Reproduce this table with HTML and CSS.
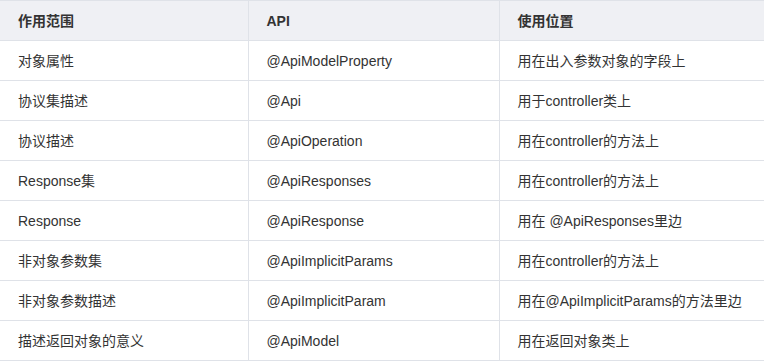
FILE: index.html
```html
<!DOCTYPE html>
<html lang="zh">
<head>
<meta charset="utf-8">
<link rel="stylesheet" href="styles.css">
</head>
<body>
<table class="api-table">
  <colgroup>
    <col class="c1"><col class="c2"><col class="c3">
  </colgroup>
  <thead>
    <tr><th>作用范围</th><th>API</th><th>使用位置</th></tr>
  </thead>
  <tbody>
    <tr><td>对象属性</td><td>@ApiModelProperty</td><td>用在出入参数对象的字段上</td></tr>
    <tr><td>协议集描述</td><td>@Api</td><td>用于controller类上</td></tr>
    <tr><td>协议描述</td><td>@ApiOperation</td><td>用在controller的方法上</td></tr>
    <tr><td>Response集</td><td>@ApiResponses</td><td>用在controller的方法上</td></tr>
    <tr><td>Response</td><td>@ApiResponse</td><td>用在 @ApiResponses里边</td></tr>
    <tr><td>非对象参数集</td><td>@ApiImplicitParams</td><td>用在controller的方法上</td></tr>
    <tr><td>非对象参数描述</td><td>@ApiImplicitParam</td><td>用在@ApiImplicitParams的方法里边</td></tr>
    <tr><td>描述返回对象的意义</td><td>@ApiModel</td><td>用在返回对象类上</td></tr>
  </tbody>
</table>
</body>
</html>
```

FILE: styles.css
```css
html, body {
  margin: 0;
  padding: 0;
  background: #ffffff;
}
body {
  font-family: "Liberation Sans", "Noto Sans CJK SC", sans-serif;
  font-size: 14px;
  color: #333333;
}
.api-table {
  width: 764px;
  border-collapse: collapse;
  table-layout: fixed;
}
.c1 { width: 248px; }
.c2 { width: 251px; }
.c3 { width: 265px; }
.api-table th,
.api-table td {
  border: 1px solid #dfe2e8;
  height: 39px;
  padding: 0 0 0 18px;
  text-align: left;
  vertical-align: middle;
  white-space: nowrap;
  line-height: 20px;
}
.api-table th {
  background: #eff0f4;
  font-weight: bold;
  color: #333333;
}
.api-table tr > :first-child { border-left: none; }
.api-table tr > :last-child { border-right: none; }
```
